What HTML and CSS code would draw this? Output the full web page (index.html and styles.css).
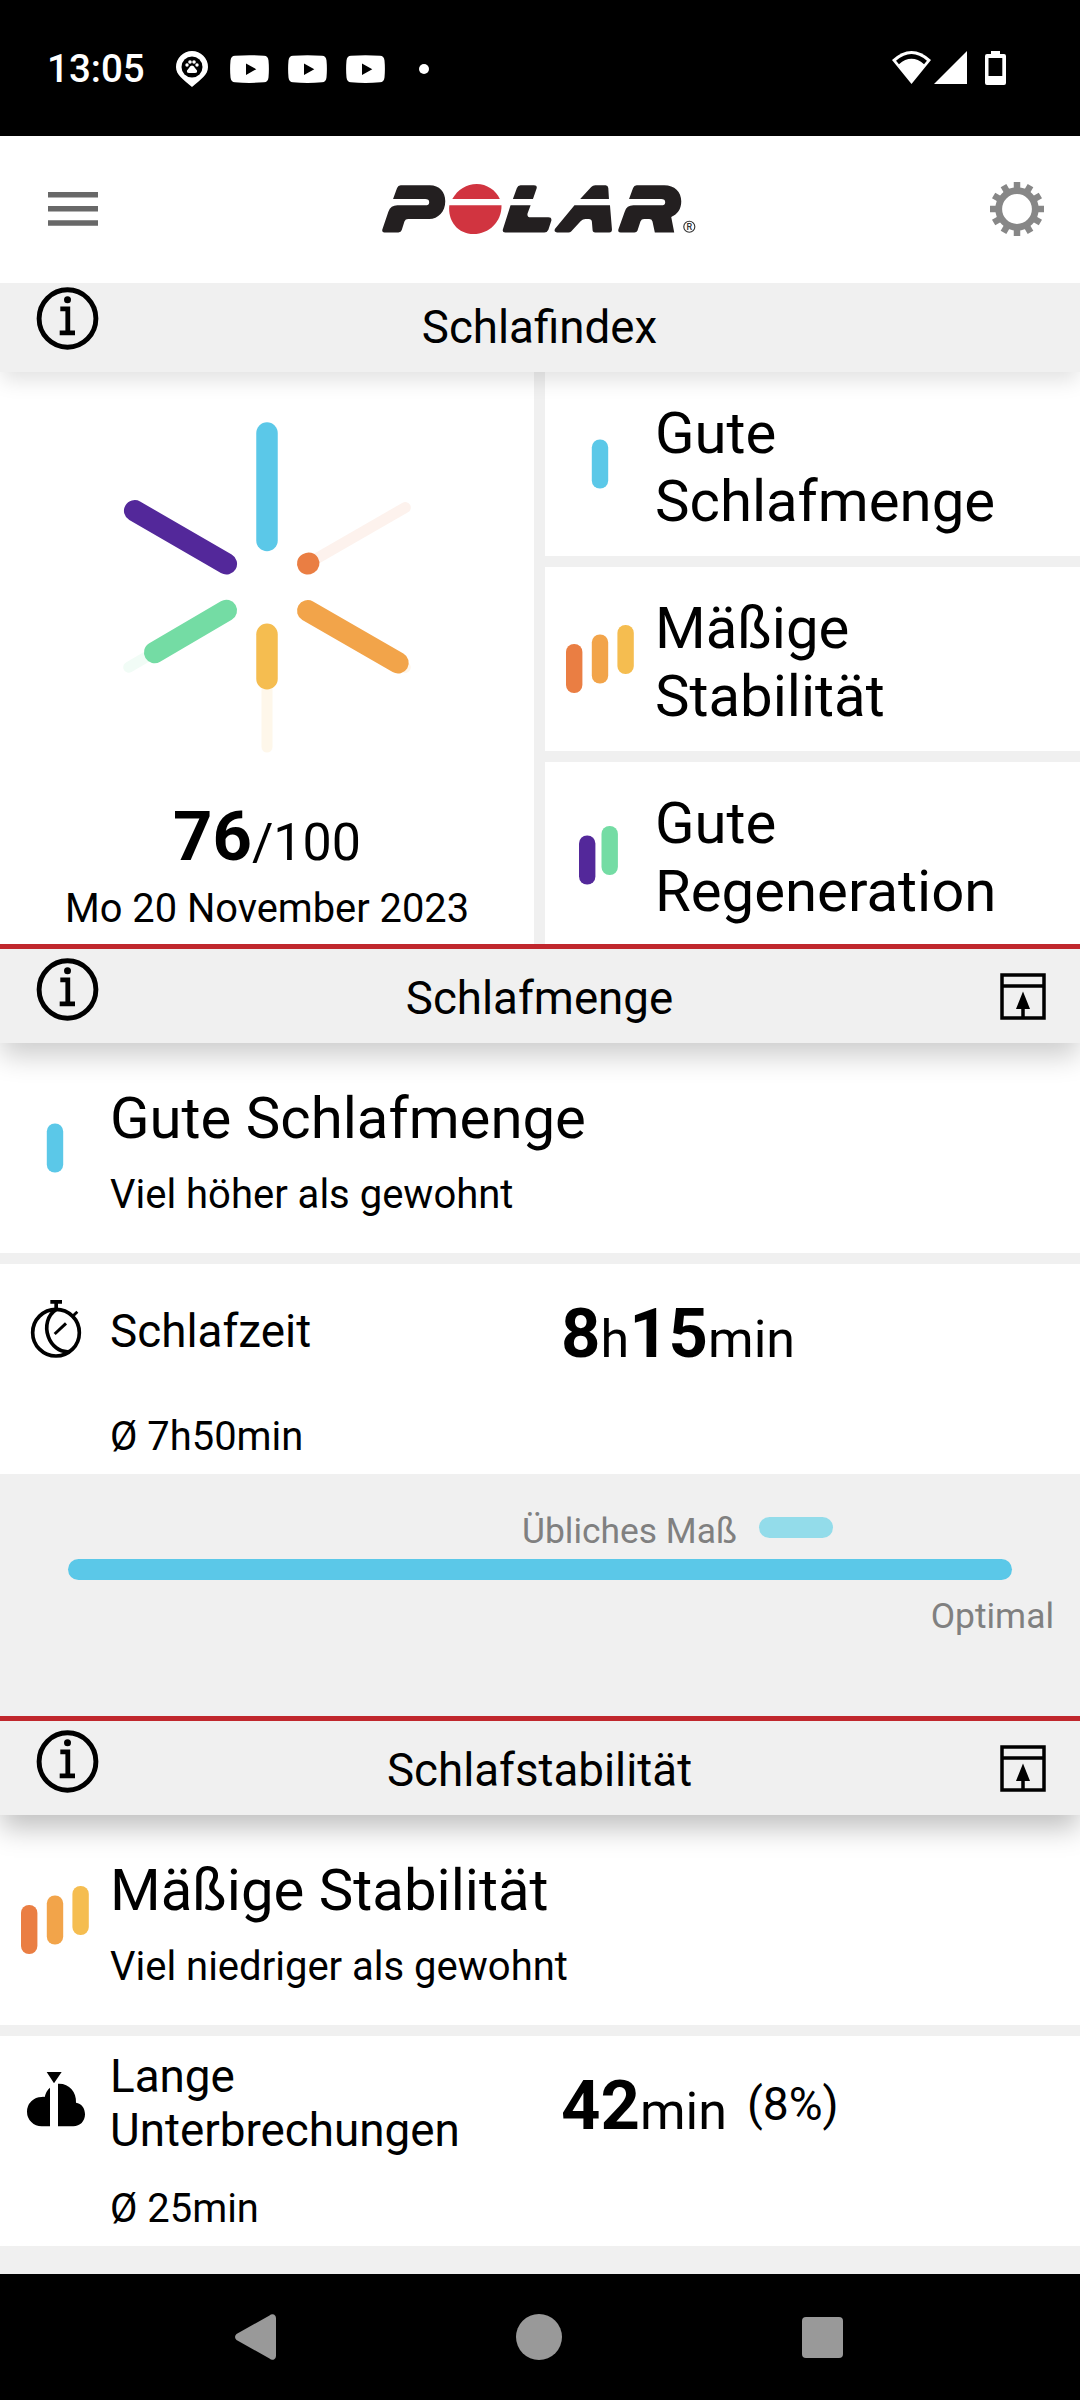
FILE: index.html
```html
<!DOCTYPE html>
<html lang="de">
<head>
<meta charset="utf-8">
<title>Schlafindex</title>
<link rel="stylesheet" href="styles.css">
</head>
<body>
<svg class="defs" aria-hidden="true">
  <symbol id="info" viewBox="0 0 63 63">
    <ellipse cx="31.5" cy="31.5" rx="28.4" ry="28.7" fill="none" stroke="#000" stroke-width="4.9"/>
    <circle cx="31.5" cy="12.7" r="3.5"/>
    <path d="M24.3 19.5H34.2V43.5H39V48.2H23.7V43.5H29.4V24.2H24.3Z"/>
  </symbol>
  <symbol id="export" viewBox="0 0 46 47">
    <path d="M2 2H44V45H2ZM2 13H44M23 34V45" fill="none" stroke="#000" stroke-width="3.5"/>
    <path d="M23 18.5L30 36H16Z"/>
  </symbol>
  <symbol id="video" viewBox="0 0 39 28">
    <path fill="#fff" fill-rule="evenodd" d="M5 .8Q19.500 -.5 34 .8Q38 1 38.500 5.500Q39.300 14 38.500 22.500Q38 27 34 27.300Q19.500 28.500 5 27.300Q1 27 .5 22.500Q-.3 14 .5 5.500Q1 1 5 .8ZM16 8.500V20L26.300 14.200Z"/>
  </symbol>
  <symbol id="bars-one" viewBox="0 0 72 72">
    <rect x="27.800" y="11.500" width="16.400" height="49" rx="8" fill="#5bc8e8"/>
  </symbol>
  <symbol id="bars-three" viewBox="0 0 72 72">
    <rect x="2" y="21" width="16.400" height="49" rx="8" fill="#ea7e43"/>
    <rect x="27.800" y="11.500" width="16.400" height="49" rx="8" fill="#f2a44a"/>
    <rect x="53.400" y="2" width="16.400" height="49" rx="8" fill="#f5bd50"/>
  </symbol>
  <symbol id="bars-two" viewBox="0 0 72 72">
    <rect x="15" y="18.500" width="16.400" height="49" rx="8" fill="#53289a"/>
    <rect x="37.500" y="9" width="16.400" height="49" rx="8" fill="#74dca4"/>
  </symbol>
</svg>

<div class="status">
  <span class="clock">13:05</span>
  <svg class="pin" viewBox="0 0 32 36">
    <path fill="#fff" d="M16 0A16 16 0 0 1 32 16C32 24 25 28 16 36C7 28 0 24 0 16A16 16 0 0 1 16 0Z"/>
    <circle cx="16" cy="16" r="10.500" fill="#000"/>
    <g fill="#fff"><circle cx="11" cy="14" r="1.700"/><circle cx="14" cy="11" r="1.800"/><circle cx="18" cy="11" r="1.800"/><circle cx="21" cy="14" r="1.700"/><path d="M16 14.500Q18 14.500 19 17L21 19.500Q21.500 22 19 22H13Q10.500 22 11 19.500L13 17Q14 14.500 16 14.500Z"/></g>
  </svg>
  <span class="videos">
    <svg><use href="#video"/></svg>
    <svg><use href="#video"/></svg>
    <svg><use href="#video"/></svg>
  </span>
  <span class="more"></span>
  <span class="system">
    <svg width="39" height="33" viewBox="0 0 39 33"><path fill="#fff" d="M19.500 33L0 9Q19.500 -9 39 9Z"/><path fill="none" stroke="#000" stroke-width="4.400" d="M5.500 11.500Q19.500 -.7 33.500 11.500"/></svg>
    <svg class="signal" width="33" height="33" viewBox="0 0 33 33"><path fill="#fff" d="M33 0V33H0Z"/></svg>
    <svg width="21" height="34" viewBox="0 0 21 34"><path fill="#fff" fill-rule="evenodd" d="M6 0H15V3H19Q21 3 21 5V32Q21 34 19 34H2Q0 34 0 32V5Q0 3 2 3H6ZM3.500 7V25H17.300V7Z"/></svg>
  </span>
</div>

<header class="appbar">
  <svg class="menu" viewBox="0 0 50 34"><path fill="#686868" d="M0 0H50V5.500H0ZM0 14H50V19.500H0ZM0 28.200H50V33.700H0Z"/></svg>
  <svg class="logo" viewBox="72 70 938 154">
    <g fill="#231f20">
      <path d="M105 117L117 84Q120 76 128 76H215C243 76 261 95 261 124C261 155 240 177 213 177H150Q142 177 139 184L131 210Q129 217 121 217H79Q71 217 73 208L91 155Q98 136 118 136H201Q213 136 213 126.500Q213 117 201 117Z"/>
      <path d="M463 117L475 84Q478 76 486 76H526Q536 76 534 85L523 117ZM456 136H516L507 160Q504 172 516 172H569Q579 172 578 181L569 209Q566 217 557 217H440Q431 217 433 208Z"/>
      <path d="M664 117L697 81Q702 76 709 76H740Q747 76 748 84L750 117ZM647 136H753L759 208Q759 217 751 217H709Q701 217 701 209L699 185Q698 177 690 177H680Q672 177 666 183L637 214Q634 217 629 217H595Q584 215 589 206Z"/>
      <path d="M810 117L822 84Q825 76 833 76H915C946 76 966 96 966 124C966 147 955 163 936 171L945 217H887L880 184Q878 177 870 177H855Q847 177 844 184L835 212Q833 217 826 217H785Q776 217 778 208L797 155Q803 136 823 136H906Q918 136 918 126.500Q918 117 906 117Z"/>
    </g>
    <g fill="#d13440">
      <path d="M282 117C298 88 325 72 355 72C385 72 412 90 424 117Z"/>
      <path d="M273 136H429C430 185 392 222 345 222C300 222 268 185 273 136Z"/>
    </g>
    <circle cx="990" cy="200" r="16.500" fill="none" stroke="#333" stroke-width="3.400"/>
    <text class="reg" x="990.500" y="209.500" text-anchor="middle">R</text>
  </svg>
  <svg class="gear" viewBox="-27 -27 54 54">
    <circle r="18.300" fill="none" stroke="#878787" stroke-width="6.800"/>
    <g stroke="#878787" stroke-width="6.500">
      <path id="teeth" d="M0 -27V-20M0 20V27M-27 0H-20M20 0H27"/>
      <use href="#teeth" transform="rotate(30)"/>
      <use href="#teeth" transform="rotate(60)"/>
    </g>
  </svg>
</header>

<main>
  <section>
    <div class="head head-first">
      <svg class="info"><use href="#info"/></svg>
      <h2>Schlafindex</h2>
      <span></span>
    </div>
    <div class="overview">
      <div class="index">
        <svg class="star" viewBox="0 0 534 424">
          <g fill="none" stroke-linecap="round" stroke-width="11">
            <path stroke="#fdf2ed" d="M308 191L405.300 135"/>
            <path stroke="#fef6ec" d="M308 238.500L405.300 295"/>
            <path stroke="#fef7ea" d="M267 262V374.500"/>
            <path stroke="#f1fcf6" d="M226 238L128.700 294.700"/>
          </g>
          <g fill="none" stroke-linecap="round" stroke-width="21.500">
            <path stroke="#5bc8e8" d="M267 60.500V168"/>
            <path stroke="#ea7e43" d="M307.700 191.300L308.700 190.700"/>
            <path stroke="#f2a44a" d="M307.700 238.300L398 290.300"/>
            <path stroke="#f5bd50" d="M267 261.800V306.200"/>
            <path stroke="#74dca4" d="M226.300 238L154.700 280"/>
            <path stroke="#53289a" d="M226.300 191.300L134.700 138.300"/>
          </g>
        </svg>
        <div class="score"><b>76</b>/100</div>
        <div class="date">Mo 20 November 2023</div>
      </div>
      <div class="ratings">
        <div class="rating"><svg class="bars"><use href="#bars-one"/></svg><p>Gute Schlafmenge</p></div>
        <div class="rating"><svg class="bars"><use href="#bars-three"/></svg><p>Mäßige Stabilität</p></div>
        <div class="rating"><svg class="bars"><use href="#bars-two"/></svg><p>Gute Regeneration</p></div>
      </div>
    </div>
  </section>

  <section class="ruled">
    <div class="head">
      <svg class="info"><use href="#info"/></svg>
      <h2>Schlafmenge</h2>
      <svg class="export"><use href="#export"/></svg>
    </div>
    <div class="summary">
      <svg class="bars"><use href="#bars-one"/></svg>
      <div><h3>Gute Schlafmenge</h3><p>Viel höher als gewohnt</p></div>
    </div>
    <div class="metric">
      <svg class="watch" viewBox="90 57 156 180">
        <g fill="none" stroke="#000">
          <circle cx="168" cy="158" r="70" stroke-width="11"/>
          <path stroke-width="11" d="M169 88C142 105 134 140 145 170C154 196 178 218 208 215"/>
          <path stroke-width="11" d="M151 65.500H186M168.500 65V88"/>
          <path stroke-width="8.500" d="M215 112L232 95"/>
          <path stroke-width="9" d="M164 162L198 130"/>
        </g>
      </svg>
      <div class="label">Schlafzeit</div>
      <div class="value"><span class="figure"><b>8</b>h<b>15</b>min</span></div>
      <div class="average">Ø 7h50min</div>
    </div>
    <div class="range">
      <div class="usual">Übliches Maß<span class="usual-bar"></span></div>
      <div class="range-bar"></div>
      <div class="optimal">Optimal</div>
    </div>
  </section>

  <section class="ruled strong">
    <div class="head">
      <svg class="info"><use href="#info"/></svg>
      <h2>Schlafstabilität</h2>
      <svg class="export"><use href="#export"/></svg>
    </div>
    <div class="summary">
      <svg class="bars"><use href="#bars-three"/></svg>
      <div><h3>Mäßige Stabilität</h3><p>Viel niedriger als gewohnt</p></div>
    </div>
    <div class="metric">
      <svg class="cloud" viewBox="78 153 180 168">
        <path d="M140 156H185L162 190ZM150 203V319H125A44 44 0 0 1 125 231Q129 230 134 231Q138 213 150 203ZM174 191C206 189 230 214 228 248C244 250 255 264 255 283C255 304 240 319 220 319H174Z"/>
      </svg>
      <div class="label">Lange Unterbrechungen</div>
      <div class="value"><span class="figure"><b>42</b>min</span><span class="share">(8%)</span></div>
      <div class="average">Ø 25min</div>
    </div>
  </section>
</main>

<nav class="navbar">
  <svg width="41" height="46" viewBox="0 0 41 46"><path fill="#999" d="M34.500 1.500Q36.500 -.5 39 .5Q41 1.500 41 4V42Q41 44.500 39 45.500Q36.500 46.500 34.500 44.500L1.500 26Q-1.500 23 1.500 20Z"/></svg>
  <svg width="46" height="46" viewBox="0 0 46 46"><circle cx="23" cy="23" r="23" fill="#999"/></svg>
  <svg width="41" height="41" viewBox="0 0 41 41"><rect width="41" height="41" rx="4" fill="#999"/></svg>
</nav>
</body>
</html>
```
FILE: styles.css
```css
* { box-sizing: border-box; }

body {
  margin: 0;
  width: 1080px;
  height: 2400px;
  overflow: hidden;
  display: flex;
  flex-direction: column;
  background: #f0f0f0;
  color: #000;
  font-family: Roboto, sans-serif;
}

h2, h3, p { margin: 0; font-weight: 400; }
svg { display: block; flex: none; }
.defs { display: none; }

/* System status bar */
.status {
  flex: none;
  height: 136px;
  padding: 2px 74px 0 47px;
  display: flex;
  align-items: center;
  background: #000;
  color: #fff;
}
.clock { width: 97px; font-size: 38.5px; font-weight: 500; line-height: 48px; }
.pin { width: 32px; height: 36px; margin-left: 32px; }
.videos { display: flex; gap: 19px; margin-left: 22px; }
.videos svg { width: 39px; height: 28px; }
.more { width: 10px; height: 10px; margin-left: 34px; border-radius: 50%; background: #fff; }
.system { display: flex; margin-left: auto; padding-bottom: 3px; }
.signal { margin: 0 18px 0 3px; }

/* App bar */
.appbar {
  flex: none;
  height: 147px;
  padding: 0 36px 0 48px;
  display: grid;
  grid-template-columns: 1fr auto 1fr;
  align-items: center;
  background: #fff;
}
.menu { width: 50px; height: 34px; margin-bottom: 2px; }
.logo { width: 314px; height: 52px; margin: 0 1px 2px -13px; }
.reg { font-size: 27px; font-weight: 500; fill: #333; }
.gear { width: 54px; height: 54px; justify-self: end; margin-bottom: 2px; }

main { flex: 1; }

/* Section headings */
.ruled { border-top: 5px solid #c0272d; }
.head {
  position: relative;
  z-index: 1;
  height: 94px;
  padding: 5px 34px 0 36px;
  display: grid;
  grid-template-columns: 1fr auto 1fr;
  align-items: center;
  background: #f0f0f0;
  box-shadow: 0 14px 26px -1px rgba(0, 0, 0, .2);
  clip-path: inset(0 0 -60px 0);
}
.strong .head { box-shadow: 0 14px 26px -1px rgba(0, 0, 0, .25); }
.head-first { height: 89px; padding-top: 0; box-shadow: 0 10px 20px -2px rgba(0, 0, 0, .12); }
.head h2 { margin-right: 3px; font-size: 45.7px; line-height: 54px; }
.info { width: 63px; height: 63px; align-self: start; margin-top: 4px; }
.export { width: 46px; height: 47px; justify-self: end; margin-bottom: 4px; }

/* Index overview */
.overview { display: grid; grid-template-columns: 534px 1fr; gap: 11px; height: 572px; }
.index { background: #fff; text-align: center; }
.star { width: 534px; height: 425px; }
.score { font-size: 52px; line-height: 80px; height: 80px; }
.score b, .figure b { font-size: 68.8px; font-weight: 700; }
.date { margin-top: 8px; font-size: 39.8px; line-height: 48px; }
.ratings { display: grid; grid-template-rows: 184px 184px 1fr; gap: 11px; }
.rating { display: grid; grid-template-columns: 110px 340px; background: #fff; }
.rating p { padding-top: 27px; font-size: 58.1px; line-height: 68px; }
.bars { width: 72px; height: 72px; justify-self: center; align-self: center; }

/* Section summary */
.summary { display: grid; grid-template-columns: 110px 1fr; height: 210px; background: #fff; }
.summary h3 { margin-top: 41px; font-size: 58.1px; line-height: 68px; }
.summary p { margin-top: 19px; font-size: 40px; line-height: 48px; }

/* Metric row */
.metric {
  display: grid;
  grid-template-columns: 110px 451px 1fr;
  grid-template-rows: 134px 76px;
  align-items: center;
  margin-top: 11px;
  background: #fff;
}
.watch { width: 52px; height: 60px; margin: 0 0 5px 30px; }
.cloud { width: 60px; height: 56px; margin: 0 0 8px 26px; }
.label { width: 380px; padding-top: 2px; font-size: 45.8px; line-height: 54px; }
.value { display: flex; align-items: center; gap: 20px; }
.figure { padding-top: 11px; font-size: 52px; line-height: 80px; }
.share { padding-top: 1px; font-size: 46.2px; line-height: 54px; }
.average { grid-column: 2; align-self: start; padding-top: 15px; font-size: 39.9px; line-height: 48px; }

/* Usual range chart */
.range { height: 242px; padding-top: 36px; color: #808080; font-size: 35.4px; line-height: 42px; }
.usual { display: flex; align-items: center; gap: 22px; padding-left: 522px; }
.usual-bar { width: 74px; height: 21px; margin-bottom: 8px; border-radius: 11px; background: #93dcea; }
.range-bar { height: 21px; margin: 7px 68px 15px; border-radius: 11px; background: #5bc8e8; }
.optimal { padding-right: 26px; text-align: right; }

/* System navigation */
.navbar {
  flex: none;
  height: 126px;
  padding: 0 116px 0 114px;
  display: grid;
  grid-template-columns: repeat(3, 1fr);
  place-items: center;
  background: #000;
}
```
